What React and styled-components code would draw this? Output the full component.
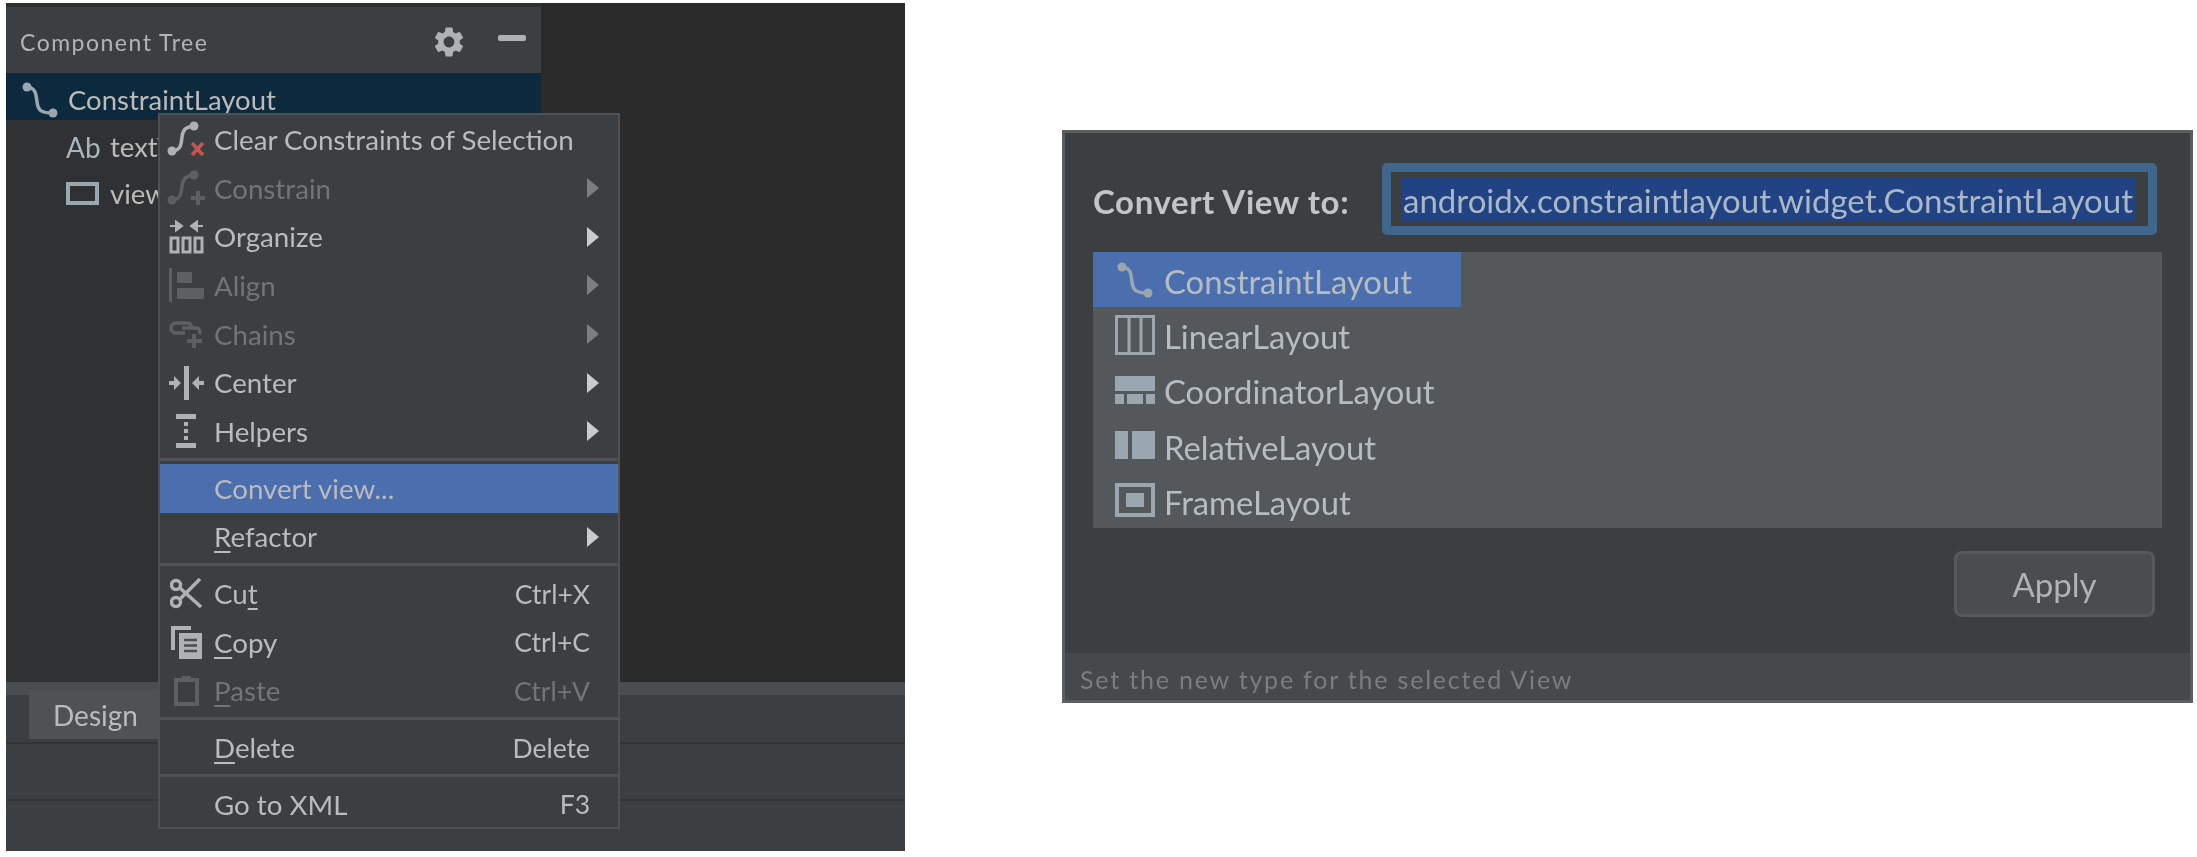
import styled, { createGlobalStyle } from "styled-components";
import { MdSettings } from "react-icons/md";

const UI_FONT = `"Lato", "Noto Sans", sans-serif`;

const GlobalStyle = createGlobalStyle`
    html, body {
        margin: 0;
        background: #ffffff;
        overflow: hidden;
    }
    * { box-sizing: border-box; }
`;

const Page = styled.div`
    display: flex;
    align-items: flex-start;
    gap: 157px;
    width: 2197px;
    height: 857px;
    padding: 3px 0 0 6px;
    font-family: ${UI_FONT};
    color: #bbbbbb;
    filter: blur(0.45px);
`;

/* left: the IDE panel */
const Ide = styled.section`
    position: relative;
    display: flex;
    flex-direction: column;
    width: 899px;
    height: 848px;
    background: #3c3f41;
`;
const Top = styled.div`
    display: flex;
    height: 679px;
    background: #2b2b2b;
`;
const Tree = styled.div`
    width: 535px;
    background: #2f3133;
`;
const TreeHeader = styled.div`
    display: flex;
    align-items: center;
    height: 70px;
    padding: 4px 15px 0 14px;
    border-top: 4px solid #2e2f30;
    background: #3c3f41;
    color: #b4b4b4;
`;
const TreeTitle = styled.span`
    flex: 1;
    font-size: 23px;
    letter-spacing: 1.5px;
`;
const HeaderMinus = styled.span`
    width: 28px;
    height: 6px;
    margin-left: 31px;
    margin-bottom: 8px;
    border-radius: 2px;
    background: #afb1b3;
`;
const TreeRow = styled.div`
    display: flex;
    align-items: center;
    gap: ${({ $selected }) => ($selected ? "10px" : "11px")};
    height: 47px;
    padding: 6px 0 0 ${({ $selected }) => ($selected ? "16px" : "60px")};
    background: ${({ $selected }) => ($selected ? "#0d293e" : "transparent")};
    font-size: 27.5px;
`;
const AbMark = styled.span`
    width: 33px;
    color: #a9b4bb;
    font-size: 28px;
`;
const TabStrip = styled.div`
    height: 13px;
    background: #4a4d4f;
`;
const TabBar = styled.div`
    height: 47px;
`;
const Tab = styled.div`
    display: flex;
    align-items: center;
    width: 150px;
    height: 49px;
    margin: -5px 0 0 23px;
    padding-left: 24px;
    background: #4e5254;
    font-size: 28px;
`;
const ToolRow = styled.div`
    height: ${({ $h }) => $h}px;
    border-top: 2px solid #323436;
`;

/* the context menu lies over the panel */
const Menu = styled.div`
    position: absolute;
    left: 152px;
    top: 110px;
    width: 462px;
    height: 716px;
    border: 2px solid #4f5153;
    background: #3c3f41;
`;
const MenuRow = styled.div`
    display: flex;
    align-items: center;
    height: 48.7px;
    padding: 0 28px 0 5px;
    background: ${({ $active }) => ($active ? "#4b6eaf" : "transparent")};
    color: ${({ $disabled }) => ($disabled ? "#727476" : "#bbbbbb")};
    font-size: 27.7px;
`;
const MenuIcon = styled.span`
    display: flex;
    align-items: center;
    justify-content: center;
    flex: none;
    width: 42px;
    margin-right: 7px;
`;
const MenuLabel = styled.span`
    flex: 1;
`;
const Shortcut = styled.span`
    font-size: 26.5px;
`;
const Arrow = styled.span`
    width: 0;
    height: 0;
    margin-right: -9px;
    border-top: 10px solid transparent;
    border-bottom: 10px solid transparent;
    border-left: 12px solid ${({ $disabled }) => ($disabled ? "#7b7d7f" : "#c9cbcd")};
`;
const Mnemonic = styled.span`
    text-decoration: underline;
    text-decoration-thickness: 2px;
    text-underline-offset: 4px;
`;
const Separator = styled.div`
    height: 8px;
    padding-top: 2px;
    &::after {
        content: "";
        display: block;
        height: 3px;
        background: #4f5153;
    }
`;

/* right: the dialog */
const Dialog = styled.section`
    display: flex;
    flex-direction: column;
    width: 1131px;
    height: 573px;
    margin-top: 127px;
    border: 3px solid #5b5d5f;
    background: #3c3f41;
`;
const DialogBody = styled.div`
    display: flex;
    flex-direction: column;
    flex: 1;
    padding: 30px 28px 0 28px;
`;
const FieldRow = styled.div`
    display: flex;
    align-items: center;
    height: 72px;
    margin-bottom: 17px;
`;
const FieldLabel = styled.label`
    width: 289px;
    padding-top: 3px;
    font-size: 33px;
    font-weight: 700;
    letter-spacing: 0.6px;
    color: #c4c4c4;
    white-space: nowrap;
`;
const FieldInput = styled.div`
    display: flex;
    align-items: center;
    width: 775px;
    height: 72px;
    padding-left: 10px;
    border: 9px solid #41668c;
    border-radius: 5px;
`;
const Selection = styled.span`
    display: block;
    width: 735px;
    height: 44px;
    padding-left: 2px;
    background: #214283;
    color: #a9b7c6;
    font-size: 33px;
    line-height: 47px;
    white-space: nowrap;
    overflow: hidden;
`;
const TypeList = styled.div`
    height: 276px;
    background: #54585a;
`;
const TypeRow = styled.div`
    display: flex;
    align-items: center;
    gap: 9px;
    width: 368px;
    height: 55.2px;
    padding-left: 22px;
    background: ${({ $selected }) => ($selected ? "#4b6eaf" : "transparent")};
    color: #b6bcc0;
    font-size: 32.8px;
`;
const TypeName = styled.span`
    padding-top: 4px;
`;
const TypeIcon = styled.span`
    display: flex;
    justify-content: center;
    width: 40px;
`;
const ButtonRow = styled.div`
    display: flex;
    justify-content: flex-end;
    padding: 23px 7px 0 0;
`;
const ApplyButton = styled.button`
    width: 201px;
    height: 66px;
    padding: 0;
    border: 3px solid #565a5c;
    border-radius: 8px;
    background: #4a4d4f;
    color: #b2b2b2;
    font-family: inherit;
    font-size: 33px;
`;
const StatusBar = styled.div`
    display: flex;
    align-items: center;
    height: 47px;
    padding: 4px 0 0 15px;
    background: #46494b;
    color: #7b7d7f;
    font-size: 25px;
    letter-spacing: 1.8px;
`;

const ICON = "#afb1b3";
const DIM = "#5d5f61";
const LAYOUT = "#9aa7b0";

const ConstraintIcon = () => (
    <svg width="36" height="36" viewBox="0 0 36 36">
        <circle cx="5" cy="5" r="4.5" fill={LAYOUT} />
        <circle cx="31" cy="31" r="4.5" fill={LAYOUT} />
        <path d="M5 5 C14 6 14 12 15 20 C16 29 20 31 31 31" fill="none" stroke={LAYOUT} strokeWidth="3.5" />
    </svg>
);
const RectIcon = () => (
    <svg width="33" height="23" viewBox="0 0 33 23">
        <rect x="2" y="2" width="29" height="19" fill="none" stroke={LAYOUT} strokeWidth="4" />
    </svg>
);
const ConstraintAction = ({ color, mark }) => (
    <svg width="38" height="36" viewBox="0 0 38 36">
        <circle cx="5" cy="30" r="4.5" fill={color} />
        <circle cx="27" cy="5" r="4.5" fill={color} />
        <path d="M5 30 C14 29 14 24 15 16 C16 8 19 6 27 5" fill="none" stroke={color} strokeWidth="3.5" />
        {mark}
    </svg>
);
const ClearIcon = () => (
    <ConstraintAction
        color={ICON}
        mark={<path d="M25 22 L36 34 M36 22 L25 34" stroke="#c75450" strokeWidth="3.5" />}
    />
);
const ConstrainIcon = () => (
    <ConstraintAction
        color={DIM}
        mark={<path d="M31 21 V35 M24 28 H38" stroke={DIM} strokeWidth="4" />}
    />
);
const OrganizeIcon = () => (
    <svg width="35" height="34" viewBox="0 0 35 34">
        <path d="M1 6 H10 M7 1.5 L13 6 L7 10.5 Z M34 6 H25 M28 1.5 L22 6 L28 10.5 Z" fill={ICON} stroke={ICON} strokeWidth="2" />
        <path d="M2 18 H9 V32 H2 Z M14 18 H21 V32 H14 Z M26 18 H33 V32 H26 Z" fill="none" stroke={ICON} strokeWidth="3" />
    </svg>
);
const AlignIcon = () => (
    <svg width="35" height="34" viewBox="0 0 35 34" fill={DIM}>
        <rect x="0" y="0" width="3" height="34" />
        <rect x="8" y="4" width="15" height="11" />
        <rect x="8" y="20" width="27" height="11" />
    </svg>
);
const ChainsIcon = () => (
    <svg width="35" height="28" viewBox="0 0 35 28">
        <path d="M16 13 H7 A5 5 0 0 1 7 3 H19 A4 4 0 0 1 22 9 M13 8 H28 A4 4 0 0 1 30 14" fill="none" stroke={DIM} strokeWidth="3.5" />
        <path d="M25 14 V28 M18 21 H33" stroke={DIM} strokeWidth="4" />
    </svg>
);
const CenterIcon = () => (
    <svg width="35" height="34" viewBox="0 0 35 34" fill={ICON}>
        <rect x="15" y="0" width="5" height="34" />
        <path d="M0 15 H5 V10 L12 17 L5 24 V19 H0 Z M35 15 H30 V10 L23 17 L30 24 V19 H35 Z" />
    </svg>
);
const HelpersIcon = () => (
    <svg width="20" height="34" viewBox="0 0 20 34" fill={ICON}>
        <rect x="0" y="0" width="20" height="5" />
        <rect x="0" y="29" width="20" height="5" />
        <rect x="8" y="8" width="4" height="4" />
        <rect x="8" y="15" width="4" height="4" />
        <rect x="8" y="22" width="4" height="4" />
    </svg>
);
const CutIcon = () => (
    <svg width="32" height="31" viewBox="0 0 32 31" fill="none" stroke={ICON} strokeWidth="3.5">
        <circle cx="6" cy="7" r="4.5" />
        <circle cx="6" cy="24" r="4.5" />
        <path d="M10 10 L31 29 M10 21 L30 1" />
    </svg>
);
const CopyIcon = () => (
    <svg width="31" height="33" viewBox="0 0 31 33">
        <path d="M20 2 H2 V24" fill="none" stroke={ICON} strokeWidth="4" />
        <rect x="8" y="7" width="23" height="26" fill={ICON} />
        <path d="M13 14 H26 M13 19.5 H26 M13 25 H26" stroke="#4c4f51" strokeWidth="2.5" />
    </svg>
);
const PasteIcon = () => (
    <svg width="25" height="31" viewBox="0 0 25 31">
        <rect x="2" y="5" width="21" height="24" fill="none" stroke={DIM} strokeWidth="4" />
        <rect x="8" y="1" width="9" height="6" fill={DIM} />
    </svg>
);
const LinearIcon = () => (
    <svg width="40" height="40" viewBox="0 0 40 40" fill="none" stroke={LAYOUT} strokeWidth="3">
        <rect x="1.5" y="1.5" width="37" height="37" />
        <path d="M14 2 V38 M26 2 V38" />
    </svg>
);
const CoordinatorIcon = () => (
    <svg width="40" height="28" viewBox="0 0 40 28" fill={LAYOUT}>
        <rect x="0" y="0" width="40" height="15" />
        <rect x="0" y="18" width="9" height="10" />
        <rect x="12" y="18" width="16" height="10" />
        <rect x="31" y="18" width="9" height="10" />
    </svg>
);
const RelativeIcon = () => (
    <svg width="40" height="28" viewBox="0 0 40 28" fill={LAYOUT}>
        <rect x="0" y="0" width="13" height="28" />
        <rect x="17" y="0" width="23" height="28" />
    </svg>
);
const FrameIcon = () => (
    <svg width="40" height="34" viewBox="0 0 40 34">
        <rect x="2" y="2" width="36" height="30" fill="none" stroke={LAYOUT} strokeWidth="4" />
        <rect x="11" y="10" width="18" height="14" fill={LAYOUT} />
    </svg>
);

const menuGroups = [
    [
        { label: "Clear Constraints of Selection", icon: <ClearIcon /> },
        { label: "Constrain", icon: <ConstrainIcon />, disabled: true, sub: true },
        { label: "Organize", icon: <OrganizeIcon />, sub: true },
        { label: "Align", icon: <AlignIcon />, disabled: true, sub: true },
        { label: "Chains", icon: <ChainsIcon />, disabled: true, sub: true },
        { label: "Center", icon: <CenterIcon />, sub: true },
        { label: "Helpers", icon: <HelpersIcon />, sub: true },
    ],
    [
        { label: "Convert view...", active: true },
        { label: <><Mnemonic>R</Mnemonic>efactor</>, sub: true },
    ],
    [
        { label: <>Cu<Mnemonic>t</Mnemonic></>, icon: <CutIcon />, keys: "Ctrl+X" },
        { label: <><Mnemonic>C</Mnemonic>opy</>, icon: <CopyIcon />, keys: "Ctrl+C" },
        { label: <><Mnemonic>P</Mnemonic>aste</>, icon: <PasteIcon />, keys: "Ctrl+V", disabled: true },
    ],
    [{ label: <><Mnemonic>D</Mnemonic>elete</>, keys: "Delete" }],
    [{ label: "Go to XML", keys: "F3" }],
];

const layouts = [
    { name: "ConstraintLayout", icon: <ConstraintIcon />, selected: true },
    { name: "LinearLayout", icon: <LinearIcon /> },
    { name: "CoordinatorLayout", icon: <CoordinatorIcon /> },
    { name: "RelativeLayout", icon: <RelativeIcon /> },
    { name: "FrameLayout", icon: <FrameIcon /> },
];

const ContextMenu = () => (
    <Menu>
        {menuGroups.map((group, g) => (
            <div key={g}>
                {g > 0 && <Separator />}
                {group.map((item, i) => (
                    <MenuRow key={i} $active={item.active} $disabled={item.disabled}>
                        <MenuIcon>{item.icon}</MenuIcon>
                        <MenuLabel>{item.label}</MenuLabel>
                        {item.keys && <Shortcut>{item.keys}</Shortcut>}
                        {item.sub && <Arrow $disabled={item.disabled} />}
                    </MenuRow>
                ))}
            </div>
        ))}
    </Menu>
);

const App = () => (
    <Page>
        <GlobalStyle />
        <Ide>
            <Top>
                <Tree>
                    <TreeHeader>
                        <TreeTitle>Component Tree</TreeTitle>
                        <MdSettings size={36} color={ICON} />
                        <HeaderMinus />
                    </TreeHeader>
                    <TreeRow $selected>
                        <ConstraintIcon />
                        <span>ConstraintLayout</span>
                    </TreeRow>
                    <TreeRow>
                        <AbMark>Ab</AbMark>
                        <span>textView</span>
                    </TreeRow>
                    <TreeRow>
                        <RectIcon />
                        <span>view</span>
                    </TreeRow>
                </Tree>
            </Top>
            <TabStrip />
            <TabBar>
                <Tab>Design</Tab>
            </TabBar>
            <ToolRow $h={57} />
            <ToolRow $h={52} />
            <ContextMenu />
        </Ide>
        <Dialog>
            <DialogBody>
                <FieldRow>
                    <FieldLabel>Convert View to:</FieldLabel>
                    <FieldInput>
                        <Selection>androidx.constraintlayout.widget.ConstraintLayout</Selection>
                    </FieldInput>
                </FieldRow>
                <TypeList>
                    {layouts.map((layout) => (
                        <TypeRow key={layout.name} $selected={layout.selected}>
                            <TypeIcon>{layout.icon}</TypeIcon>
                            <TypeName>{layout.name}</TypeName>
                        </TypeRow>
                    ))}
                </TypeList>
                <ButtonRow>
                    <ApplyButton>Apply</ApplyButton>
                </ButtonRow>
            </DialogBody>
            <StatusBar>Set the new type for the selected View</StatusBar>
        </Dialog>
    </Page>
);

export default App;
